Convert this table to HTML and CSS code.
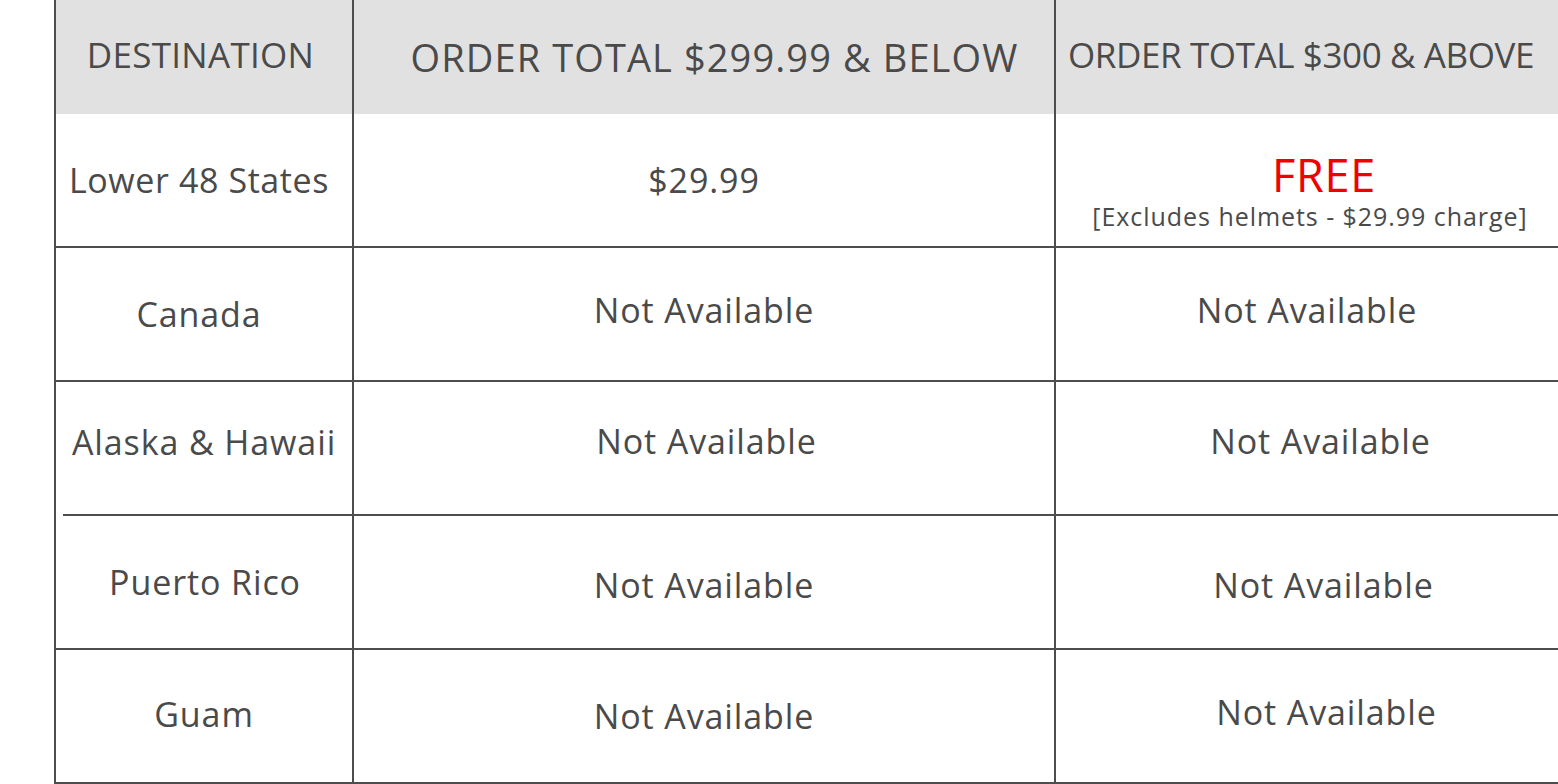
FILE: index.html
```html
<!DOCTYPE html>
<html lang="en">
<head>
<meta charset="utf-8">
<title>Shipping Rates</title>
<link rel="stylesheet" href="styles.css">
</head>
<body>
<div class="rates">
  <div class="cell head col1 h-dest">DESTINATION</div>
  <div class="cell head col2 h-below">ORDER TOTAL $299.99 &amp; BELOW</div>
  <div class="cell head col3 h-above">ORDER TOTAL $300 &amp; ABOVE</div>

  <div class="cell col1 l-lower">Lower 48 States</div>
  <div class="cell col2">$29.99</div>
  <div class="cell col3 free-cell">
    <span class="free">FREE</span>
    <span class="note">[Excludes helmets - $29.99 charge]</span>
  </div>

  <div class="cell col1 l-canada">Canada</div>
  <div class="cell col2 up-4">Not Available</div>
  <div class="cell col3 up-4">Not Available</div>

  <div class="cell col1 short-rule l-alaska">Alaska &amp; Hawaii</div>
  <div class="cell col2 na-alaska">Not Available</div>
  <div class="cell col3 na-alaska3">Not Available</div>

  <div class="cell col1 l-pr">Puerto Rico</div>
  <div class="cell col2 down-3">Not Available</div>
  <div class="cell col3 na-pr3">Not Available</div>

  <div class="cell col1 l-guam">Guam</div>
  <div class="cell col2">Not Available</div>
  <div class="cell col3 na-guam3">Not Available</div>
</div>
</body>
</html>
```
FILE: styles.css
```css
html, body {
  margin: 0;
  padding: 0;
  background: #ffffff;
  overflow: hidden;
}

body {
  width: 1558px;
  height: 784px;
  font-family: "Open Sans", "Liberation Sans", sans-serif;
  font-weight: 500;
  color: #4a4a4a;
}

.rates {
  display: grid;
  grid-template-columns: 298px 702px 502px;
  grid-template-rows: 114px repeat(5, 134px);
  margin-left: 54px;
  border-left: 2px solid #4d4d4d;
}

.cell {
  display: flex;
  flex-direction: column;
  align-items: center;
  justify-content: center;
  box-sizing: border-box;
  border-bottom: 2px solid #4d4d4d;
  font-size: 34px;
  letter-spacing: 0.9px;
  white-space: nowrap;
  line-height: 1;
}

.col1, .col2 {
  border-right: 2px solid #4d4d4d;
}

.head {
  background: #e1e1e1;
  border-bottom: none;
  font-size: 35px;
  letter-spacing: 0.3px;
}

.h-dest { padding: 0 7px 6px 0; }
.h-below { font-size: 38px; letter-spacing: 1.1px; padding-left: 21px; }
.h-above { letter-spacing: -0.4px; padding: 0 12px 6px 0; }

.l-lower { padding-right: 10px; letter-spacing: 0.6px; }
.l-canada { padding: 0 10px 0 0; }
.l-alaska { padding-bottom: 14px; }
.l-pr { padding-left: 2px; }
.l-guam { padding: 0 0 4px 0; }

.up-4 { padding-bottom: 8px; }
.down-3 { padding-top: 6px; }
.na-alaska { padding: 0 0 14px 5px; }
.na-alaska3 { padding: 0 0 14px 27px; }
.na-pr3 { padding: 6px 0 0 33px; }
.na-guam3 { padding: 0 0 8px 39px; }

.short-rule {
  border-bottom: none;
  background: linear-gradient(#4d4d4d, #4d4d4d) no-repeat right bottom / calc(100% - 7px) 2px;
}

.free-cell {
  padding-top: 20px;
  gap: 7px;
}

.free {
  color: #f00000;
  font-size: 45px;
  letter-spacing: 0.8px;
  margin-left: 34px;
}

.note {
  font-size: 25px;
  letter-spacing: 0.95px;
  margin-left: 6px;
}
```
